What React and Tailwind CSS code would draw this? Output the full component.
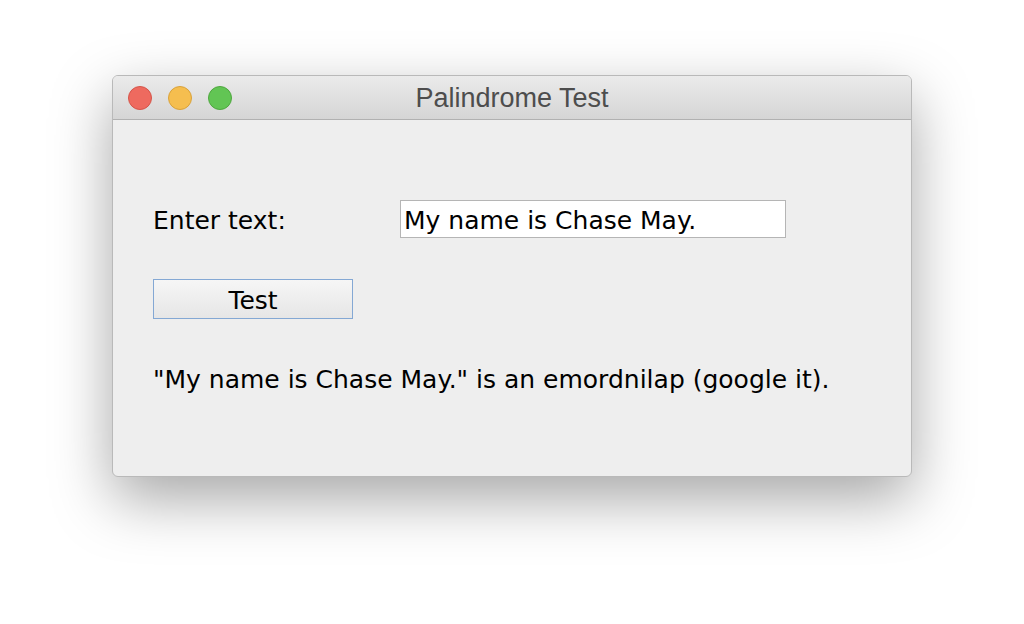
export default function App() {
  const font = { fontFamily: '"DejaVu Sans", "Liberation Sans", sans-serif' }

  return (
    <div className="w-[1024px] h-[624px] bg-white flex items-start justify-center pt-[75px]">
      <div className="w-[800px] h-[402px] rounded-[6px] border border-[#b9b9b9] bg-[#eeeeee] overflow-hidden shadow-[0_22px_60px_rgba(0,0,0,0.35)] flex flex-col">
        {/* Title bar */}
        <div className="h-[44px] shrink-0 relative flex items-center bg-gradient-to-b from-[#ebebeb] to-[#d5d5d5] border-b border-[#b1b1b1]">
          <div className="flex items-center gap-[16px] pl-[15px]">
            <span className="w-[24px] h-[24px] rounded-full bg-[#ee6a5f] border border-[#d5554a]"></span>
            <span className="w-[24px] h-[24px] rounded-full bg-[#f5be4f] border border-[#d9a23b]"></span>
            <span className="w-[24px] h-[24px] rounded-full bg-[#62c554] border border-[#4fa73f]"></span>
          </div>
          <div
            className="absolute inset-0 flex items-center justify-center text-[27px] text-[#4d4d4d] pt-[1px]"
            style={{ fontFamily: '"Liberation Sans", Arial, sans-serif' }}
          >
            Palindrome Test
          </div>
        </div>

        {/* Content */}
        <div className="flex flex-col pl-[40px] pt-[80px] text-[25px] leading-[30px] text-black" style={font}>
          <div className="flex items-center h-[38px]">
            <span className="w-[247px] pt-[3px]">Enter text:</span>
            <div className="w-[386px] h-[38px] bg-white border border-[#b5b5b5] flex items-center pl-[3px] pt-[3px]">
              My name is Chase May.
            </div>
          </div>
          <button className="mt-[41px] w-[200px] h-[40px] border border-[#84a8d4] bg-gradient-to-b from-[#f6f6f6] to-[#e6e6e6] flex items-center justify-center leading-[30px] pt-[3px]">
            Test
          </button>
          <div className="mt-[46px]">"My name is Chase May." is an emordnilap (google it).</div>
        </div>
      </div>
    </div>
  )
}
